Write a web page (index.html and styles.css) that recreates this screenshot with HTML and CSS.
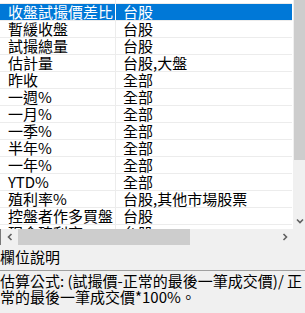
FILE: index.html
```html
<!DOCTYPE html>
<html>
<head>
<meta charset="utf-8">
<link rel="stylesheet" href="styles.css">
</head>
<body>
<div class="app">
  <div class="grid-area">
    <div class="table">
      <div class="rows">
        <div class="spacer"><div class="c1"></div><div class="c2"></div></div>
        <div class="row selected"><div class="c1">收盤試撮價差比</div><div class="c2">台股</div></div>
        <div class="row"><div class="c1">暫緩收盤</div><div class="c2">台股</div></div>
        <div class="row"><div class="c1">試撮總量</div><div class="c2">台股</div></div>
        <div class="row"><div class="c1">估計量</div><div class="c2">台股,大盤</div></div>
        <div class="row"><div class="c1">昨收</div><div class="c2">全部</div></div>
        <div class="row"><div class="c1">一週%</div><div class="c2">全部</div></div>
        <div class="row"><div class="c1">一月%</div><div class="c2">全部</div></div>
        <div class="row"><div class="c1">一季%</div><div class="c2">全部</div></div>
        <div class="row"><div class="c1">半年%</div><div class="c2">全部</div></div>
        <div class="row"><div class="c1">一年%</div><div class="c2">全部</div></div>
        <div class="row"><div class="c1">YTD%</div><div class="c2">全部</div></div>
        <div class="row"><div class="c1">殖利率%</div><div class="c2">台股,其他市場股票</div></div>
        <div class="row"><div class="c1">控盤者作多買盤</div><div class="c2">台股</div></div>
        <div class="row"><div class="c1">現金殖利率</div><div class="c2">台股</div></div>
      </div>
      <div class="hscroll">
        <div class="arrow-btn">
          <svg width="8" height="8" viewBox="0 0 8 8"><path d="M5.5 1 L2.5 4 L5.5 7" fill="none" stroke="#606060" stroke-width="1.6"/></svg>
        </div>
        <div class="hthumb"></div>
        <div class="htrack"></div>
        <div class="arrow-btn right">
          <svg width="8" height="8" viewBox="0 0 8 8"><path d="M2.5 1 L5.5 4 L2.5 7" fill="none" stroke="#606060" stroke-width="1.6"/></svg>
        </div>
      </div>
    </div>
    <div class="vscroll">
      <div class="vthumb"></div>
      <div class="vtrack"></div>
      <div class="down-btn">
        <svg width="8" height="8" viewBox="0 0 8 8"><path d="M1 2.5 L4 5.5 L7 2.5" fill="none" stroke="#606060" stroke-width="1.6"/></svg>
      </div>
      <div class="corner"></div>
    </div>
  </div>
  <div class="info">
    <div class="info-title">欄位說明</div>
    <div class="info-text">估算公式: (試撮價-正常的最後一筆成交價)/ 正<br>常的最後一筆成交價*100%。</div>
  </div>
</div>
</body>
</html>
```

FILE: styles.css
```css
html, body {
  margin: 0;
  padding: 0;
}
body {
  width: 305px;
  height: 313px;
  overflow: hidden;
  background: #f0f0f0;
  font-family: "Noto Sans CJK TC", "Noto Sans", sans-serif;
  font-size: 15px;
  color: #000;
}
.app {
  display: flex;
  flex-direction: column;
  width: 305px;
  height: 313px;
}
.grid-area {
  display: flex;
  height: 245px;
}
.table {
  width: 293px;
  display: flex;
  flex-direction: column;
}
.rows {
  height: 229px;
  overflow: hidden;
  background: #fff;
  padding-right: 1px;
}
.spacer {
  height: 3px;
  display: flex;
  border-bottom: 1px solid #ececec;
}
.row {
  display: flex;
  height: 16px;
  line-height: 16px;
  border-bottom: 1px solid #ececec;
  white-space: nowrap;
}
.c1 {
  width: 107px;
  padding-left: 8px;
  border-right: 1px solid #ececec;
}
.c2 {
  flex: 1;
  padding-left: 7px;
}
.row.selected {
  background: #0078d7;
  color: #fff;
}
.row.selected .c1 {
  border-right-color: #ffffff;
}
.hscroll {
  height: 16px;
  display: flex;
  background: #f0f0f0;
  border-left: 1px solid #7a7a7a;
}
.arrow-btn {
  width: 17px;
  display: flex;
  align-items: center;
  justify-content: center;
}
.arrow-btn.right {
  width: 17px;
}
.hthumb {
  width: 172px;
  background: #cdcdcd;
}
.htrack {
  flex: 1;
}
.vscroll {
  width: 12px;
  display: flex;
  flex-direction: column;
  background: #f0f0f0;
}
.vthumb {
  height: 160px;
  background: #cdcdcd;
  margin-left: 1px;
}
.vtrack {
  height: 52px;
}
.down-btn {
  height: 17px;
  display: flex;
  align-items: center;
  justify-content: flex-end;
  padding-right: 1px;
}
.corner {
  flex: 1;
}
.info {
  flex: 1;
  background: #f0f0f0;
}
.info-title {
  height: 26px;
  line-height: 16px;
  padding-top: 4px;
  box-sizing: border-box;
  border-bottom: 1px solid #a0a0a0;
}
.info-text {
  padding-top: 2px;
  line-height: 16px;
  white-space: nowrap;
}
```
